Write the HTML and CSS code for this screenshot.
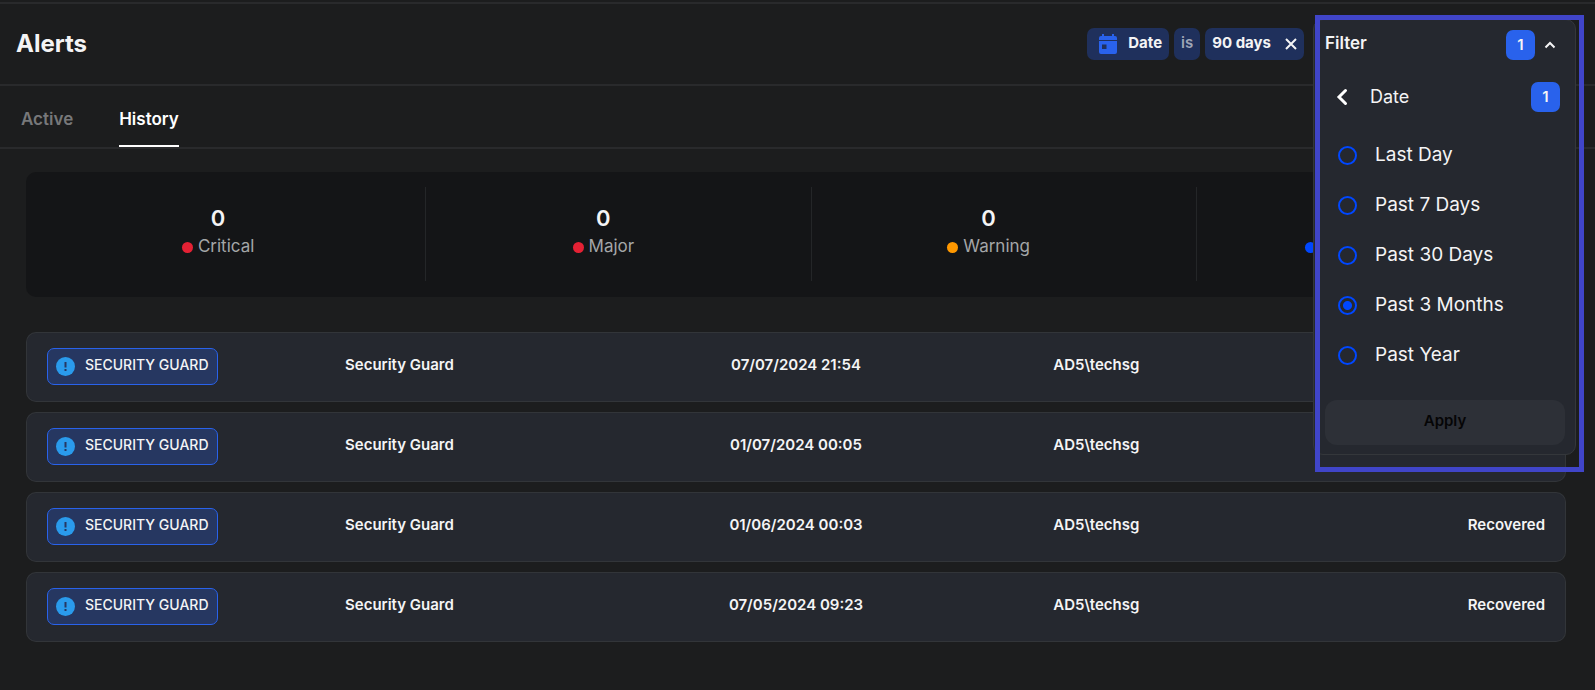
FILE: index.html
```html
<!DOCTYPE html>
<html lang="en">
<head>
<meta charset="utf-8">
<meta name="viewport" content="width=device-width, initial-scale=1">
<title>Alerts</title>
<link rel="stylesheet" href="styles.css">
</head>
<body>
<header class="header">
  <h1 class="title">Alerts</h1>
  <div class="chips">
    <span class="chip">
      <svg class="chip-icon" viewBox="0 0 18 20" width="18" height="20" aria-hidden="true">
        <path fill="#2962ec" fill-rule="evenodd" d="M3 0h2v2h8V0h2v2h1a2 2 0 0 1 2 2v2H0V4a2 2 0 0 1 2-2h1zM0 7h18v11a2 2 0 0 1-2 2H2a2 2 0 0 1-2-2zM3 10.500v4.500h4.500v-4.500z"/>
      </svg>
      <span>Date</span>
    </span>
    <span class="chip chip-operator">is</span>
    <span class="chip chip-value">
      <span>90 days</span>
      <button class="icon-button" type="button" aria-label="Remove filter">
        <svg viewBox="0 0 12 12" width="12" height="12"><path d="M1 1l10 10M11 1L1 11" stroke="#f4f4f5" stroke-width="2" fill="none"/></svg>
      </button>
    </span>
  </div>
</header>

<nav class="tabs">
  <a class="tab" href="#active">Active</a>
  <a class="tab tab-current" href="#history" aria-current="page">History</a>
</nav>

<main class="content">
  <section class="summary">
    <div class="stat"><strong class="stat-count">0</strong><span class="stat-label"><i class="dot dot-red"></i>Critical</span></div>
    <div class="stat"><strong class="stat-count">0</strong><span class="stat-label"><i class="dot dot-red"></i>Major</span></div>
    <div class="stat"><strong class="stat-count">0</strong><span class="stat-label"><i class="dot dot-orange"></i>Warning</span></div>
    <div class="stat"><strong class="stat-count"></strong><span class="stat-label stat-label-wide"><i class="dot dot-blue"></i></span></div>
  </section>

  <table class="alerts">
    <colgroup><col class="col-type"><col class="col-name"><col class="col-date"><col class="col-device"><col class="col-status"></colgroup>
    <tbody>
      <tr>
        <td><span class="badge"><svg class="badge-icon" viewBox="0 0 19 19" width="19" height="19" aria-hidden="true"><circle cx="9.500" cy="9.500" r="9.500" fill="#2a9bec"/><path d="M9.500 5v5.500M9.500 12v2" stroke="#263761" stroke-width="2"/></svg><span>SECURITY GUARD</span></span></td>
        <td>Security Guard</td><td>07/07/2024 21:54</td><td>AD5\techsg</td><td></td>
      </tr>
      <tr>
        <td><span class="badge"><svg class="badge-icon" viewBox="0 0 19 19" width="19" height="19" aria-hidden="true"><circle cx="9.500" cy="9.500" r="9.500" fill="#2a9bec"/><path d="M9.500 5v5.500M9.500 12v2" stroke="#263761" stroke-width="2"/></svg><span>SECURITY GUARD</span></span></td>
        <td>Security Guard</td><td>01/07/2024 00:05</td><td>AD5\techsg</td><td></td>
      </tr>
      <tr>
        <td><span class="badge"><svg class="badge-icon" viewBox="0 0 19 19" width="19" height="19" aria-hidden="true"><circle cx="9.500" cy="9.500" r="9.500" fill="#2a9bec"/><path d="M9.500 5v5.500M9.500 12v2" stroke="#263761" stroke-width="2"/></svg><span>SECURITY GUARD</span></span></td>
        <td>Security Guard</td><td>01/06/2024 00:03</td><td>AD5\techsg</td><td>Recovered</td>
      </tr>
      <tr>
        <td><span class="badge"><svg class="badge-icon" viewBox="0 0 19 19" width="19" height="19" aria-hidden="true"><circle cx="9.500" cy="9.500" r="9.500" fill="#2a9bec"/><path d="M9.500 5v5.500M9.500 12v2" stroke="#263761" stroke-width="2"/></svg><span>SECURITY GUARD</span></span></td>
        <td>Security Guard</td><td>07/05/2024 09:23</td><td>AD5\techsg</td><td>Recovered</td>
      </tr>
    </tbody>
  </table>
</main>

<form class="filter">
  <div class="filter-header">
    <span class="filter-title">Filter</span>
    <span class="count">1</span>
    <button class="icon-button" type="button" aria-label="Collapse filter">
      <svg viewBox="0 0 12 8" width="12" height="8"><path d="M1.500 6.500L6 2l4.500 4.500" stroke="#f4f4f5" stroke-width="2" fill="none"/></svg>
    </button>
  </div>
  <div class="filter-group">
    <button class="icon-button" type="button" aria-label="Back">
      <svg viewBox="0 0 12 18" width="12" height="18"><path d="M9.500 2.500L3 9l6.500 6.500" stroke="#fff" stroke-width="3" stroke-linecap="round" fill="none"/></svg>
    </button>
    <span class="group-name">Date</span>
    <span class="count">1</span>
  </div>
  <div class="options">
    <label class="option"><input class="radio" type="radio" name="range"><span>Last Day</span></label>
    <label class="option"><input class="radio" type="radio" name="range"><span>Past 7 Days</span></label>
    <label class="option"><input class="radio" type="radio" name="range"><span>Past 30 Days</span></label>
    <label class="option"><input class="radio" type="radio" name="range" checked><span>Past 3 Months</span></label>
    <label class="option"><input class="radio" type="radio" name="range"><span>Past Year</span></label>
  </div>
  <button class="apply" type="button">Apply</button>
</form>
</body>
</html>
```

FILE: styles.css
```css
* {
  box-sizing: border-box;
}

body {
  position: relative;
  min-height: 100vh;
  margin: 0;
  padding-top: 2px;
  background: #1c1d1e;
  color: #f4f4f5;
  font-family: Inter, "Liberation Sans", sans-serif;
  font-size: 15px;
  line-height: 20px;
}

button {
  font: inherit;
}

.icon-button {
  display: flex;
  padding: 0;
  border: 0;
  background: none;
}

.header {
  display: flex;
  align-items: center;
  justify-content: space-between;
  padding: 24px 291px 24px 16px;
  border-top: 2px solid #292a2c;
  border-bottom: 2px solid #292a2c;
}

.title {
  margin: 0;
  font-size: 24px;
  font-weight: 700;
  line-height: 32px;
}

.chips {
  display: flex;
  gap: 5px;
}

.chip {
  display: flex;
  align-items: center;
  height: 32px;
  padding: 0 7px;
  border-radius: 7px;
  background: #1f305c;
  font-weight: 700;
}

.chip > span {
  padding-bottom: 2px;
}

.chip-icon {
  margin: 0 11px 0 5px;
}

.chip-operator {
  padding-bottom: 2px;
  color: #9fa6b6;
  font-weight: 600;
}

.chip-value {
  gap: 14px;
}

.tabs {
  display: flex;
  gap: 46px;
  padding: 0 21px;
  border-bottom: 2px solid #292a2c;
}

.tab {
  padding: 22px 0 15px;
  border-bottom: 2px solid transparent;
  color: #77787a;
  font-size: 17px;
  font-weight: 600;
  line-height: 22px;
  text-decoration: none;
}

.tab-current {
  border-color: #fff;
  color: #fff;
}

.content {
  padding: 23px 29px 0 26px;
}

.summary {
  display: flex;
  overflow: hidden;
  padding: 15px 0 16px 15px;
  border-radius: 10px;
  background: #141517;
}

.stat {
  display: flex;
  flex: 0 0 calc(25% + 4px);
  flex-direction: column;
  align-items: center;
  gap: 3px;
  padding: 18px 30px 23px 0;
  border-right: 1px solid #242628;
}

.stat:last-child {
  border-right: 0;
}

.stat-count {
  min-height: 26px;
  font-size: 22px;
  font-weight: 600;
  line-height: 26px;
}

.stat-label {
  display: flex;
  align-items: center;
  gap: 5px;
  height: 24px;
  color: #a4a6a8;
  font-size: 17px;
  line-height: 24px;
}

.stat-label-wide {
  width: 138px;
}

.dot {
  width: 11px;
  height: 11px;
  margin-top: 2px;
  border-radius: 50%;
}

.dot-red {
  background: #e42134;
}

.dot-orange {
  background: #ff9800;
}

.dot-blue {
  background: #0047ff;
}

.alerts {
  width: 100%;
  margin-top: 25px;
  border-spacing: 0 10px;
  table-layout: fixed;
}

.col-type {
  width: 14.5%;
}

.col-name {
  width: 19.5%;
}

.col-date {
  width: 32%;
}

.col-device {
  width: 7%;
}

.col-status {
  width: 27%;
}

.alerts td {
  height: 70px;
  padding: 0 0 4px;
  border: solid #323539;
  border-width: 1px 0;
  background: #25282f;
  font-weight: 600;
  text-align: center;
}

.alerts td:first-child {
  padding: 0 0 2px 20px;
  border-left-width: 1px;
  border-radius: 10px 0 0 10px;
  text-align: left;
}

.alerts td:last-child {
  padding-right: 20px;
  border-right-width: 1px;
  border-radius: 0 10px 10px 0;
  text-align: right;
}

.badge {
  display: inline-flex;
  align-items: center;
  height: 37px;
  padding: 0 8px;
  border: 1px solid #2962ec;
  border-radius: 7px;
  background: #263761;
  font-size: 14px;
  font-weight: 500;
  vertical-align: middle;
}

.badge > span {
  padding: 0 0 3px 10px;
}

.filter {
  position: absolute;
  top: 19px;
  right: 19px;
  width: 263px;
  padding: 10px 10px 9px 11px;
  border: 1px solid #34373b;
  border-radius: 10px;
  background: #25282f;
}

.filter::after {
  content: "";
  position: absolute;
  inset: -5px -9px -18px 1px;
  border: 5px solid #4045c9;
  pointer-events: none;
}

.filter-header {
  display: flex;
  align-items: center;
  gap: 9px;
  padding-right: 9px;
}

.filter-title {
  flex: 1;
  padding-bottom: 4px;
  font-size: 17px;
  font-weight: 600;
}

.count {
  display: grid;
  place-items: center;
  width: 29px;
  height: 30px;
  border-radius: 7px;
  background: #2962ec;
  font-weight: 600;
}

.filter-group {
  display: flex;
  align-items: center;
  padding: 22px 5px 18px 11px;
}

.group-name {
  flex: 1;
  padding-left: 22px;
  font-size: 18px;
}

.option {
  display: flex;
  align-items: center;
  gap: 18px;
  height: 50px;
  padding-left: 13px;
  font-size: 19px;
}

.option > span {
  padding-bottom: 1px;
}

.radio {
  appearance: none;
  width: 19px;
  height: 19px;
  margin: 0;
  border: 2px solid #0047ff;
  border-radius: 50%;
}

.radio:checked {
  background: radial-gradient(circle, #0047ff 0 4px, transparent 5px);
}

.apply {
  width: 100%;
  height: 45px;
  margin-top: 20px;
  padding-bottom: 4px;
  border: 0;
  border-radius: 12px;
  background: #2d3037;
  color: #050506;
  font-weight: 600;
}
```
